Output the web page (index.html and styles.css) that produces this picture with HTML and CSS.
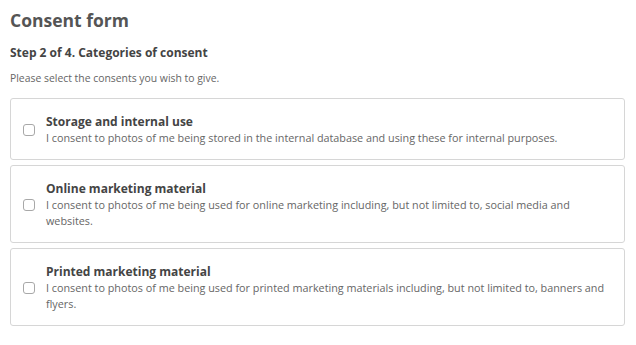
FILE: index.html
```html
<!DOCTYPE html>
<html lang="en">
<head>
<meta charset="utf-8">
<title>Consent form</title>
<link rel="stylesheet" href="styles.css">
</head>
<body>
<main class="page">
  <h1 class="title">Consent form</h1>
  <h2 class="step">Step 2 of 4. Categories of consent</h2>
  <p class="intro">Please select the consents you wish to give.</p>
  <div class="list">
    <label class="card">
      <span class="box"></span>
      <span class="body">
        <span class="card-title">Storage and internal use</span>
        <span class="card-desc">I consent to photos of me being stored in the internal database and using these for internal purposes.</span>
      </span>
    </label>
    <label class="card">
      <span class="box"></span>
      <span class="body">
        <span class="card-title">Online marketing material</span>
        <span class="card-desc">I consent to photos of me being used for online marketing including, but not limited to, social media and websites.</span>
      </span>
    </label>
    <label class="card">
      <span class="box"></span>
      <span class="body">
        <span class="card-title">Printed marketing material</span>
        <span class="card-desc">I consent to photos of me being used for printed marketing materials including, but not limited to, banners and flyers.</span>
      </span>
    </label>
  </div>
</main>
</body>
</html>
```

FILE: styles.css
```css
html, body {
  margin: 0;
  background: #fff;
}
.page {
  padding: 8px 11px 0 10px;
  font-family: "Open Sans", "Noto Sans", sans-serif;
  color: #555;
}
.title {
  margin: 0;
  font-size: 17.5px;
  line-height: 24px;
  font-weight: 700;
  color: #555;
}
.step {
  margin: 12px 0 0;
  font-size: 12px;
  line-height: 18px;
  font-weight: 700;
  color: #444;
}
.intro {
  margin: 9px 0 0;
  font-size: 10.4px;
  line-height: 14px;
  color: #666;
}
.list {
  margin-top: 13px;
  display: flex;
  flex-direction: column;
  gap: 5px;
}
.card {
  display: flex;
  align-items: center;
  gap: 11px;
  border: 1px solid #d6d6d6;
  border-radius: 3px;
  padding: 14px 12px 13px 12px;
}
.box {
  flex: none;
  width: 10px;
  height: 10px;
  border: 1px solid #a8a8a8;
  border-radius: 3px;
  background: #fff;
}
.body {
  display: flex;
  flex-direction: column;
}
.card-title {
  font-size: 12px;
  line-height: 17px;
  font-weight: 700;
  color: #444;
}
.card-desc {
  font-size: 10.8px;
  line-height: 16px;
  color: #666;
}
```
